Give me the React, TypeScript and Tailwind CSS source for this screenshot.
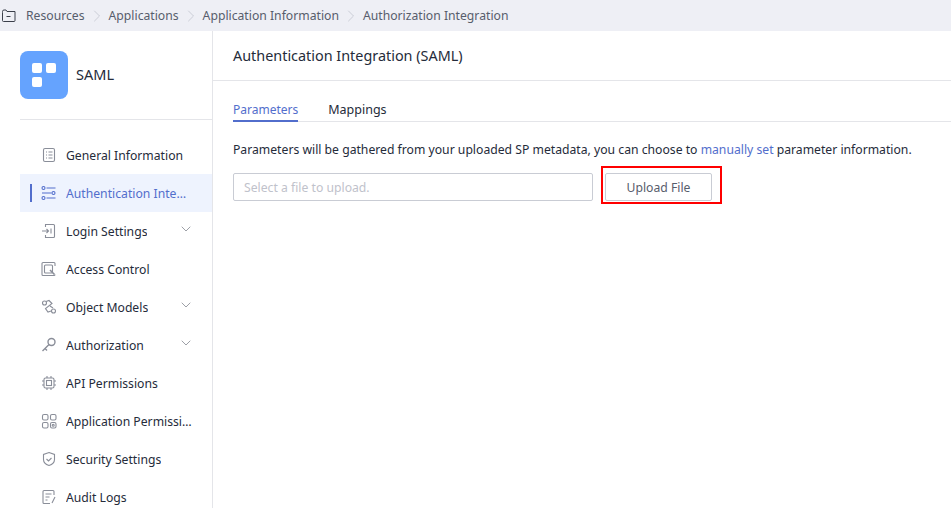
import * as React from "react";
import { ChevronDown, ChevronRight } from "lucide-react";

const GRAY = "#8a8e99";

function Icon({ children }: { children: React.ReactNode }) {
    return (
        <svg width="16" height="16" viewBox="0 0 16 16" fill="none" stroke={GRAY} strokeWidth="1.1" className="shrink-0">
            {children}
        </svg>
    );
}

const icons: Record<string, React.ReactNode> = {
    general: (
        <>
            <rect x="2.5" y="1.5" width="11" height="13" rx="1.5" />
            <path d="M5 5h1M7.5 5h4M5 8h1M7.5 8h4M5 11h1M7.5 11h4" />
        </>
    ),
    auth: (
        <>
            <circle cx="2.5" cy="3" r="1.5" stroke="#526ecc" />
            <path d="M5.5 3h9M1 8h9.5M5.5 13h9" stroke="#526ecc" />
            <circle cx="12.5" cy="8" r="1.5" stroke="#526ecc" />
            <circle cx="2.5" cy="13" r="1.5" stroke="#526ecc" />
        </>
    ),
    login: (
        <>
            <path d="M4.5 4V1.5h8a1 1 0 0 1 1 1v11a1 1 0 0 1-1 1h-8V12" />
            <path d="M1 8h6.5M5.5 6l2 2-2 2M10 5.5v5" />
        </>
    ),
    access: (
        <>
            <path d="M14 5V2.500a1 1 0 0 0-1-1H2a1 1 0 0 0-1 1v11a1 1 0 0 0 1 1h11a1 1 0 0 0 1-1" />
            <rect x="3.500" y="4" width="8" height="8" rx="1" />
            <path d="M9 9l4.500 4.500" strokeWidth="1.6" />
        </>
    ),
    models: (
        <>
            <circle cx="3.500" cy="4" r="2" />
            <circle cx="12.500" cy="12" r="2" />
            <path d="M5 2.500l3-1 3 3-6.500 5 2.500 3.500 3-1M9 7l3 2" />
        </>
    ),
    authorization: (
        <>
            <circle cx="10.500" cy="5" r="3.500" strokeWidth="1.4" />
            <path d="M8 7.500L1.500 14M4 11.500l2 2" strokeWidth="1.4" />
        </>
    ),
    api: (
        <>
            <rect x="3" y="3" width="10" height="10" rx="1.500" />
            <rect x="5.500" y="5.500" width="5" height="5" />
            <path d="M6 1v2M10 1v2M6 13v2M10 13v2M1 6h2M1 10h2M13 6h2M13 10h2" />
        </>
    ),
    perms: (
        <>
            <rect x="1.500" y="1.500" width="5.500" height="5.500" rx="1.500" />
            <rect x="9.500" y="1.500" width="5.500" height="5.500" rx="1.500" />
            <rect x="1.500" y="9.500" width="5.500" height="5.500" rx="1.500" />
            <rect x="9.500" y="9.500" width="5.500" height="5.500" rx="1.500" />
            <circle cx="12.200" cy="12.200" r="1" />
        </>
    ),
    security: (
        <>
            <path d="M8 1.500l5.500 2v5c0 3-2.500 5-5.500 6-3-1-5.500-3-5.500-6v-5z" />
            <path d="M5.500 8l2 2 3-3" />
        </>
    ),
    audit: (
        <>
            <path d="M13 6V2.500a1 1 0 0 0-1-1H3a1 1 0 0 0-1 1v11a1 1 0 0 0 1 1h6" />
            <path d="M4.500 5h6M4.500 8h4M4.500 11h2M14 8l-3 6" />
        </>
    ),
};

const menu = [
    { key: "general", label: "General Information" },
    { key: "auth", label: "Authentication Integration (SAML)", active: true },
    { key: "login", label: "Login Settings", arrow: true },
    { key: "access", label: "Access Control" },
    { key: "models", label: "Object Models", arrow: true },
    { key: "authorization", label: "Authorization", arrow: true },
    { key: "api", label: "API Permissions" },
    { key: "perms", label: "Application Permissions" },
    { key: "security", label: "Security Settings" },
    { key: "audit", label: "Audit Logs" },
];

const crumbs = ["Resources", "Applications", "Application Information", "Authorization Integration"];

function Sidebar() {
    return (
        <aside className="w-[213px] shrink-0 border-r border-[#e4e5e9] pl-5">
            <div className="flex h-[89px] items-center gap-2 border-b border-[#e4e5e9]">
                <div className="flex h-12 w-12 items-center justify-center rounded-lg bg-[#65a3fe]">
                    <div className="grid grid-cols-2 gap-1">
                        <span className="h-[10px] w-[10px] rounded-[2px] bg-white" />
                        <span className="h-[10px] w-[10px] rounded-[2px] bg-white" />
                        <span className="h-[10px] w-[10px] rounded-[2px] bg-white" />
                    </div>
                </div>
                <span className="text-[14.5px] text-[#252b3a]">SAML</span>
            </div>
            <nav className="mt-[16px]">
                {menu.map((item) => (
                    <div
                        key={item.key}
                        className={`relative flex h-[38px] items-center gap-[9px] pl-[21px] pr-5 text-[12.2px] ${
                            item.active ? "bg-[#eef3fe] text-[#526ecc]" : "text-[#252b3a]"
                        }`}
                    >
                        {item.active && <span className="absolute left-[10px] top-[10px] h-[18px] w-[2px] bg-[#526ecc]" />}
                        <Icon>{icons[item.key]}</Icon>
                        <span className="truncate pt-[2px]">{item.label}</span>
                        {item.arrow && (
                            <ChevronDown size={16} strokeWidth={1} className="absolute right-[18px] top-[9px] text-[#6b6f7a]" />
                        )}
                    </div>
                ))}
            </nav>
        </aside>
    );
}

export default function App() {
    return (
        <div className="flex h-[508px] w-[951px] flex-col overflow-hidden bg-white font-['Noto_Sans','Open_Sans',sans-serif]">
            <header className="flex h-[31px] shrink-0 items-center bg-[#eeeff5] pl-[2px] text-[12.2px] text-[#575d6c]">
                <svg width="14" height="14" viewBox="0 0 14 14" fill="none" stroke="#3b3f4a" strokeWidth="1" className="mr-[10px]">
                    <path d="M.5 3.500v8a1 1 0 0 0 1 1h10.500a1 1 0 0 0 1-1v-9H5l-1-1.500H2a1.500 1.500 0 0 0-1.500 1.500z" />
                    <path d="M4.500 7.500h4" />
                </svg>
                {crumbs.map((c, i) => (
                    <React.Fragment key={c}>
                        {i > 0 && <ChevronRight size={20} strokeWidth={1} className="mx-[2px] text-[#c4c7d0]" />}
                        <span className="pt-[2px]">{c}</span>
                    </React.Fragment>
                ))}
            </header>
            <div className="flex min-h-0 flex-1">
                <Sidebar />
                <main className="min-w-0 flex-1 text-[#252b3a]">
                    <div className="flex h-[50px] items-center border-b border-[#e4e5e9] pl-5 text-[14.4px]">
                        Authentication Integration (SAML)
                    </div>
                    <div className="pl-5 pt-[18px]">
                        <div className="flex h-[23px] gap-[30px] border-b border-[#e4e5e9] leading-[22px]">
                            <span className="h-[23px] border-b-2 border-[#526ecc] text-[12px] text-[#526ecc]">Parameters</span>
                            <span className="text-[12.5px]">Mappings</span>
                        </div>
                        <p className="mt-[18px] whitespace-nowrap text-[12.2px] leading-[20px]">
                            Parameters will be gathered from your uploaded SP metadata, you can choose to{" "}
                            <span className="text-[#526ecc]">manually set</span> parameter information.
                        </p>
                        <div className="mt-[13px] flex items-center gap-3">
                            <div className="flex h-7 w-[360px] items-center rounded-[2px] border border-[#c9ccd4] px-[10px] pt-[2px] text-[12.2px] text-[#bfc2cb]">
                                Select a file to upload.
                            </div>
                            <div className="relative">
                                <button className="h-7 w-[107px] rounded-[2px] border border-[#c9ccd4] pt-[2px] text-[12.2px] text-[#575d6c]">
                                    Upload File
                                </button>
                                <span className="absolute left-[-4px] top-[-7px] h-[38px] w-[121px] border-2 border-[#ff0000]" />
                            </div>
                        </div>
                    </div>
                </main>
            </div>
        </div>
    );
}
